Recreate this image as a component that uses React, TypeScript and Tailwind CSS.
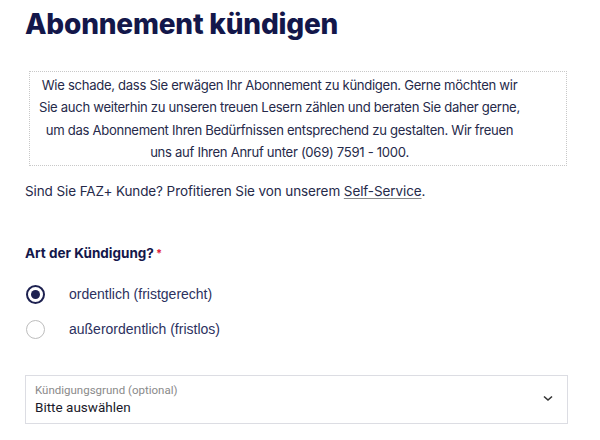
import React from "react";

export default function App() {
  return (
    <div className="w-[600px] h-[440px] bg-white overflow-hidden" style={{ fontFamily: "Inter, 'Liberation Sans', sans-serif" }}>
      <div className="pl-[25px] pr-[32px]">
        <h1 className="pt-[6px] text-[28px] leading-[36px] font-extrabold text-[#13174a] tracking-[-0.2px]">
          Abonnement kündigen
        </h1>
        <div className="mt-[29px] ml-[4px] w-[538px] h-[95px] border border-dotted border-[#c8c8c8] flex items-center justify-center pl-0 pr-[37px]">
          <p className="text-center text-[13.1px] leading-[22.5px] text-[#262a4a] tracking-[-0.3px] whitespace-nowrap">
            Wie schade, dass Sie erwägen Ihr Abonnement zu kündigen. Gerne möchten wir
            <br />
            Sie auch weiterhin zu unseren treuen Lesern zählen und beraten Sie daher gerne,
            <br />
            um das Abonnement Ihren Bedürfnissen entsprechend zu gestalten. Wir freuen
            <br />
            uns auf Ihren Anruf unter (069) 7591 - 1000.
          </p>
        </div>
        <p className="mt-[15px] text-[13.5px] leading-[20px] text-[#262a4a] tracking-[-0.1px]">
          Sind Sie FAZ+ Kunde? Profitieren Sie von unserem{" "}
          <span className="underline underline-offset-2 decoration-[#888]">Self-Service</span>.
        </p>
        <p className="mt-[42px] text-[13.5px] leading-[20px] font-bold text-[#13174a]">
          Art der Kündigung?<span className="text-[#e0203a] text-[11px] align-top ml-[2px]">*</span>
        </p>
        <div className="mt-[22px] flex flex-col gap-[16px]" style={{ fontFamily: "'Liberation Sans', Arial, sans-serif" }}>
          <div className="flex items-center h-[19px]">
            <div className="w-[19px] h-[19px] rounded-full border-[2px] border-[#1d2150] flex items-center justify-center ml-[1px]">
              <div className="w-[9px] h-[9px] rounded-full bg-[#1d2150]" />
            </div>
            <span className="ml-[24px] text-[14px] text-[#2c3160]">ordentlich (fristgerecht)</span>
          </div>
          <div className="flex items-center h-[19px]">
            <div className="w-[19px] h-[19px] rounded-full border border-[#bdbdbd] ml-[1px]" />
            <span className="ml-[24px] text-[14px] text-[#2c3160]">außerordentlich (fristlos)</span>
          </div>
        </div>
        <div className="mt-[36px] w-[543px] h-[49px] border border-[#dcdde3] flex items-center justify-between pl-[9px] pr-[14px]" style={{ fontFamily: "Roboto, 'Liberation Sans', sans-serif" }}>
          <div className="flex flex-col">
            <span className="text-[11.5px] leading-[15px] text-[#8a8a8a]">Kündigungsgrund (optional)</span>
            <span className="text-[13.5px] leading-[18px] text-[#1a1a2a]">Bitte auswählen</span>
          </div>
          <svg width="10" height="7" viewBox="0 0 10 7" className="mt-[-2px]">
            <path d="M1 1.5 L5 5 L9 1.5" fill="none" stroke="#333" strokeWidth="1.6" />
          </svg>
        </div>
      </div>
    </div>
  );
}
